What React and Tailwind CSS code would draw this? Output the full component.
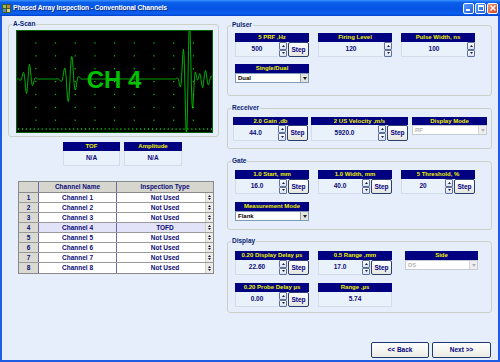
import React from "react";

const TAU = Math.PI * 2;

function pulse(x, c, a, w, p) {
  const d = x - c;
  return a * Math.exp(-(d * d) / (w * w)) * Math.sin((d / p) * TAU);
}

function wavePoints() {
  const pts = [];
  for (let x = 0; x <= 197; x += 0.5) {
    let y = 49;
    y -= pulse(x, 12, 16, 5, 6.5);
    y -= pulse(x, 54, 25, 6, 7.5);
    y -= pulse(x, 172, 62, 5.5, 6.5);
    y -= pulse(x, 188, 9, 7, 6);
    y = Math.max(0.5, Math.min(102.5, y));
    pts.push(`${x},${y.toFixed(2)}`);
  }
  return pts.join(" ");
}

function Scope() {
  const dots = [];
  for (let i = 1; i < 10; i++) {
    for (let j = 1; j < 8; j++) {
      dots.push(
        <rect key={`${i}-${j}`} x={i * 19.7 - 0.5} y={j * 12.875 - 0.5} width="1.2" height="1.2" fill="#00d000" />
      );
    }
  }
  const ticks = [];
  for (let x = 2; x < 197; x += 3.94) {
    ticks.push(<rect key={x} x={x} y="98" width="1" height="2" fill="#00b000" />);
  }
  return (
    <svg width="197" height="103" viewBox="0 0 197 103" className="block">
      <rect x="0" y="0" width="197" height="103" fill="#000" />
      {dots}
      {ticks}
      <polyline points={wavePoints()} fill="none" stroke="#00c400" strokeWidth="0.9" />
      <text
        x="98"
        y="58"
        textAnchor="middle"
        fill="#00c000"
        fontFamily="'Liberation Sans', Arial, sans-serif"
        fontWeight="bold"
        fontSize="24"
      >
        CH 4
      </text>
      <rect x="0.5" y="0.5" width="196" height="102" fill="none" stroke="#006400" />
    </svg>
  );
}

function GroupBox({ label, className, children }) {
  return (
    <div className={`relative border border-[#ccd1c6] rounded-[3px] ${className}`}>
      <span className="absolute -top-[5px] left-[3px] px-[1px] bg-[#e5eefa] text-[6.5px] leading-[8px] font-bold text-[#0a1f73]">
        {label}
      </span>
      {children}
    </div>
  );
}

function Arrow({ up }) {
  return (
    <svg width="3" height="2" viewBox="0 0 3 2" className="block">
      <polygon points={up ? "1.5,0 3,2 0,2" : "0,0 3,0 1.5,2"} fill="#1a1a40" />
    </svg>
  );
}

function Spin() {
  return (
    <div className="w-[8px] flex flex-col ml-[1px]">
      <div className="flex-1 flex items-center justify-center border border-[#5e729c] rounded-[1px] bg-[linear-gradient(#ffffff,#d9e2f2)]">
        <Arrow up />
      </div>
      <div className="flex-1 flex items-center justify-center border border-[#5e729c] rounded-[1px] bg-[linear-gradient(#ffffff,#d9e2f2)]">
        <Arrow />
      </div>
    </div>
  );
}

function StepBtn() {
  return (
    <div className="ml-[1px] w-[21px] flex items-center justify-center border border-[#29406f] rounded-[2px] bg-[linear-gradient(#ffffff,#e6e6df)] text-[6.5px] font-bold text-[#000080]">
      Step
    </div>
  );
}

function Field({ label, value, step = true, className = "w-[74px]", tall = false }) {
  return (
    <div className={className}>
      <div
        className={`${tall ? "h-[8px] leading-[8px]" : "h-[9px] leading-[9px]"} bg-[#000080] text-[#f2f200] text-[6px] font-bold text-center whitespace-nowrap`}
      >
        {label}
      </div>
      <div className={`flex ${tall ? "h-[16px]" : "h-[15px]"}`}>
        <div className="flex-1 flex items-center justify-center bg-[#e9f1fb] border-l border-b border-[#d3dde9] text-[6.5px] font-bold text-[#0b0b78]">
          {value}
        </div>
        <Spin />
        {step && <StepBtn />}
      </div>
    </div>
  );
}

function Readout({ label, value, className = "w-[74px]" }) {
  return (
    <div className={className}>
      <div className="h-[9px] leading-[9px] bg-[#000080] text-[#f2f200] text-[6px] font-bold text-center">{label}</div>
      <div className="h-[15px] flex items-center justify-center bg-[#e9f1fb] border-x border-b border-[#d3dde9] text-[6.5px] font-bold text-[#0b0b78]">
        {value}
      </div>
    </div>
  );
}

function Combo({ label, value, disabled = false, className = "w-[74px]", tall = false }) {
  return (
    <div className={className}>
      <div
        className={`${tall ? "h-[8px] leading-[8px]" : "h-[9px] leading-[9px]"} bg-[#000080] text-[#f2f200] text-[6px] font-bold text-center`}
      >
        {label}
      </div>
      <div className={`h-[10px] flex bg-white border ${disabled ? "border-[#c5cbd3]" : "border-[#7f9db9]"}`}>
        <div className={`flex-1 pl-[2px] text-[6px] leading-[8px] font-bold ${disabled ? "text-[#b4b4b4]" : "text-black"}`}>
          {value}
        </div>
        <div
          className={`w-[8px] flex items-center justify-center border-l ${
            disabled ? "border-[#d4d4d4] bg-[#efefef]" : "border-[#9c9c9c] bg-[#e4e4de]"
          }`}
        >
          <svg width="4" height="3" viewBox="0 0 4 3" className="block">
            <polygon points="0,0 4,0 2,3" fill={disabled ? "#b0b0b0" : "#202020"} />
          </svg>
        </div>
      </div>
    </div>
  );
}

function RowSpin() {
  return (
    <div className="w-[8px] h-full flex flex-col justify-center gap-[1px] bg-[#ecece6] border-l border-[#cfcfc8]">
      <div className="flex justify-center">
        <Arrow up />
      </div>
      <div className="flex justify-center">
        <Arrow />
      </div>
    </div>
  );
}

function ChannelTable() {
  const rows = [1, 2, 3, 4, 5, 6, 7, 8].map((n) => ({
    n,
    name: `Channel ${n}`,
    type: n === 4 ? "TOFD" : "Not Used",
  }));
  return (
    <div className="w-[196px] border border-[#8a8a8a] text-[6.5px] font-bold text-[#0b0b78]">
      <div className="flex h-[11px] bg-[#d6d6ce] border-b border-[#8a8a8a]">
        <div className="w-[20px] border-r border-[#6a6aa8]" />
        <div className="w-[78px] border-r border-[#6a6aa8] flex items-center justify-center">Channel Name</div>
        <div className="flex-1 flex items-center justify-center">Inspection Type</div>
      </div>
      {rows.map((r) => (
        <div
          key={r.n}
          className={`flex h-[10px] border-b border-[#9a9a9a] last:border-b-0 ${r.n === 4 ? "bg-[#e2e2f8]" : "bg-white"}`}
        >
          <div className="w-[20px] border-r border-[#6a6aa8] bg-[#dadad2] flex items-center justify-center">{r.n}</div>
          <div className="w-[78px] border-r border-[#6a6aa8] flex items-center justify-center">{r.name}</div>
          <div className="flex-1 flex items-center">
            <div className="flex-1 text-center pl-[8px]">{r.type}</div>
            <RowSpin />
          </div>
        </div>
      ))}
    </div>
  );
}

function TitleBar() {
  return (
    <div className="h-[16px] flex items-center bg-[linear-gradient(180deg,#3d95ff_0%,#0a5fea_15%,#0553e3_55%,#0a5ff0_85%,#0042c8_100%)]">
      <svg width="9" height="9" viewBox="0 0 9 9" className="ml-[2px] block">
        <rect x="0" y="0" width="9" height="9" fill="#3c5a2a" />
        <rect x="1" y="1" width="3" height="3" fill="#8fc05a" />
        <rect x="5" y="1" width="3" height="3" fill="#c08a3a" />
        <rect x="1" y="5" width="3" height="3" fill="#5a8ad0" />
        <rect x="5" y="5" width="3" height="3" fill="#e0d070" />
      </svg>
      <span className="ml-[2px] text-white text-[6.8px] tracking-[-0.15px] font-bold [text-shadow:1px_1px_0_#0a2a80]">
        Phased Array Inspection - Conventional Channels
      </span>
      <div className="ml-auto mr-[2px] flex gap-[1px]">
        <div className="w-[11px] h-[11px] rounded-[2px] border border-white bg-[linear-gradient(135deg,#5a9bff,#1f5fe0)] flex items-end pl-[2px] pb-[2px]">
          <div className="w-[4px] h-[1.5px] bg-white" />
        </div>
        <div className="w-[11px] h-[11px] rounded-[2px] border border-white bg-[linear-gradient(135deg,#5a9bff,#1f5fe0)] flex items-center justify-center">
          <div className="w-[6px] h-[6px] border border-white border-t-2" />
        </div>
        <div className="w-[11px] h-[11px] rounded-[2px] border border-white bg-[linear-gradient(135deg,#f09a7a,#d8401a)] flex items-center justify-center">
          <svg width="6" height="6" viewBox="0 0 6 6" className="block">
            <path d="M0.5 0.5 L5.5 5.5 M5.5 0.5 L0.5 5.5" stroke="#fff" strokeWidth="1.4" />
          </svg>
        </div>
      </div>
    </div>
  );
}

function NavBtn({ children, className }) {
  return (
    <div
      className={`h-[16px] flex items-center justify-center border border-[#1e3a6e] rounded-[2px] bg-[linear-gradient(#ffffff,#ebebe4)] text-[6.5px] font-bold text-[#000080] ${className}`}
    >
      {children}
    </div>
  );
}

export default function App() {
  return (
    <div className="w-[500px] h-[362px] flex flex-col overflow-hidden font-['Liberation_Sans',Arial,sans-serif]">
      <TitleBar />
      <div className="flex-1 flex bg-[#e5eefa] border-x-2 border-b-2 border-[#1f5ce4]">
        {/* left column */}
        <div className="w-[211px] ml-[6px] flex flex-col">
          <GroupBox label="A-Scan" className="mt-[8px] h-[113px] pl-[7px] pt-[5px]">
            <Scope />
          </GroupBox>
          <div className="mt-[5px] ml-[55px] flex gap-[4px]">
            <Readout label="TOF" value="N/A" className="w-[57px]" />
            <Readout label="Amplitude" value="N/A" className="w-[58px]" />
          </div>
          <div className="mt-[15px] ml-[10px]">
            <ChannelTable />
          </div>
        </div>

        {/* right column */}
        <div className="w-[265px] ml-[8px] flex flex-col">
          <GroupBox label="Pulser" className="mt-[9px] h-[71px] pl-[7px] pt-[7px]">
            <div className="flex gap-[9px]">
              <Field label="5 PRF ,Hz" value="500" />
              <Field label="Firing Level" value="120" step={false} />
              <Field label="Pulse Width, ns" value="100" step={false} />
            </div>
            <Combo label="Single/Dual" value="Dual" className="w-[74px] mt-[7px]" />
          </GroupBox>

          <GroupBox label="Receiver" className="mt-[12px] h-[41px] pl-[5px] pt-[8px]">
            <div className="flex">
              <Field label="2.0 Gain ,db" value="44.0" className="w-[75px]" tall />
              <Field label="2 US Velocity ,m/s" value="5920.0" className="w-[97px] ml-[3px]" tall />
              <Combo label="Display Mode" value="RF" disabled className="w-[75px] ml-[4px]" tall />
            </div>
          </GroupBox>

          <GroupBox label="Gate" className="mt-[12px] h-[69px] pl-[7px] pt-[8px]">
            <div className="flex gap-[9px]">
              <Field label="1.0 Start, mm" value="16.0" />
              <Field label="1.0 Width, mm" value="40.0" />
              <Field label="5 Threshold, %" value="20" />
            </div>
            <Combo label="Measurement Mode" value="Flank" className="w-[74px] mt-[8px]" />
          </GroupBox>

          <GroupBox label="Display" className="mt-[11px] h-[72px] pl-[7px] pt-[9px]">
            <div className="flex">
              <Field label="0.20 Display Delay µs" value="22.60" />
              <Field label="0.5 Range ,mm" value="17.0" className="w-[74px] ml-[9px]" />
              <Combo label="Side" value="DS" disabled className="w-[73px] ml-[13px]" />
            </div>
            <div className="flex mt-[8px]">
              <Field label="0.20 Probe Delay µs" value="0.00" />
              <Readout label="Range ,µs" value="5.74" className="w-[74px] ml-[9px]" />
            </div>
          </GroupBox>

          <div className="mt-[29px] flex justify-end gap-[3px] mr-[1px]">
            <NavBtn className="w-[58px]">&lt;&lt; Back</NavBtn>
            <NavBtn className="w-[59px]">Next &gt;&gt;</NavBtn>
          </div>
        </div>
      </div>
    </div>
  );
}
